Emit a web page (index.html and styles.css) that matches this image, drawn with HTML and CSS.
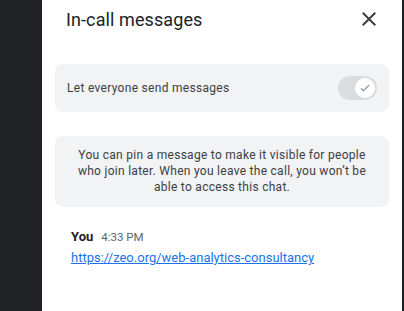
FILE: index.html
```html
<!DOCTYPE html>
<html>
<head>
<meta charset="utf-8">
<link rel="stylesheet" href="styles.css">
</head>
<body>
<div class="app">
  <div class="side"></div>
  <div class="panel">
    <div class="header">
      <h1 class="title">In-call messages</h1>
      <button class="close" aria-label="Close">
        <svg width="24" height="24" viewBox="0 0 24 24"><path d="M19 6.41 17.59 5 12 10.59 6.41 5 5 6.41 10.59 12 5 17.59 6.41 19 12 13.41 17.59 19 19 17.59 13.41 12z" fill="#3c4043"/></svg>
      </button>
    </div>
    <div class="card setting">
      <span class="setting-label">Let everyone send messages</span>
      <span class="switch">
        <span class="knob">
          <svg width="12" height="12" viewBox="0 0 24 24"><path d="M9 16.17 4.83 12l-1.42 1.41L9 19 21 7l-1.41-1.41z" fill="#80868b"/></svg>
        </span>
      </span>
    </div>
    <div class="card note">You can pin a message to make it visible for people who join later. When you leave the call, you won’t be able to access this chat.</div>
    <div class="message">
      <div class="meta"><span class="sender">You</span><span class="time">4:33 PM</span></div>
      <a class="link" href="#">https://zeo.org/web-analytics-consultancy</a>
    </div>
  </div>
  <div class="edge"></div>
</div>
</body>
</html>
```
FILE: styles.css
```css
html, body {
  margin: 0;
  padding: 0;
  background: #202124;
}
body {
  font-family: Roboto, "Noto Sans", Arial, sans-serif;
  width: 404px;
  height: 311px;
  overflow: hidden;
}
.app {
  display: flex;
  height: 311px;
}
.side {
  width: 42px;
  flex: none;
  background: #202124;
}
.edge {
  width: 2px;
  flex: none;
  background: #202124;
}
.panel {
  width: 360px;
  flex: none;
  background: #fff;
  display: flex;
  flex-direction: column;
}
.header {
  height: 38px;
  display: flex;
  align-items: center;
  justify-content: space-between;
  padding: 0 21px 0 24px;
}
.title {
  margin: 0;
  font-size: 18px;
  font-weight: 400;
  color: #202124;
  letter-spacing: 0.1px;
}
.close {
  border: 0;
  background: none;
  padding: 0;
  width: 24px;
  height: 24px;
  display: flex;
}
.card {
  margin: 0 13px;
  background: #f1f3f4;
  border-radius: 8px;
}
.setting {
  margin-top: 26px;
  height: 48px;
  display: flex;
  align-items: center;
  justify-content: space-between;
  padding: 0 12px;
}
.setting-label {
  font-size: 12px;
  color: #3c4043;
  letter-spacing: 0.3px;
}
.switch {
  width: 39px;
  height: 24px;
  border-radius: 12px;
  background: #dadce0;
  display: flex;
  align-items: center;
  justify-content: flex-end;
  padding: 0 2px;
  box-sizing: border-box;
}
.knob {
  width: 20px;
  height: 20px;
  border-radius: 50%;
  background: #fff;
  display: flex;
  align-items: center;
  justify-content: center;
}
.note {
  margin-top: 24px;
  padding: 11px 18px 12px;
  font-size: 12px;
  line-height: 16px;
  color: #3c4043;
  text-align: center;
  letter-spacing: 0.28px;
}
.message {
  padding: 22px 29px;
}
.meta {
  display: flex;
  align-items: baseline;
  gap: 8px;
}
.sender {
  font-size: 13px;
  font-weight: 700;
  color: #202124;
}
.time {
  font-size: 11.5px;
  color: #5f6368;
}
.link {
  display: inline-block;
  margin-top: 6px;
  font-size: 13px;
  color: #1a73e8;
  text-decoration: underline;
}
```
